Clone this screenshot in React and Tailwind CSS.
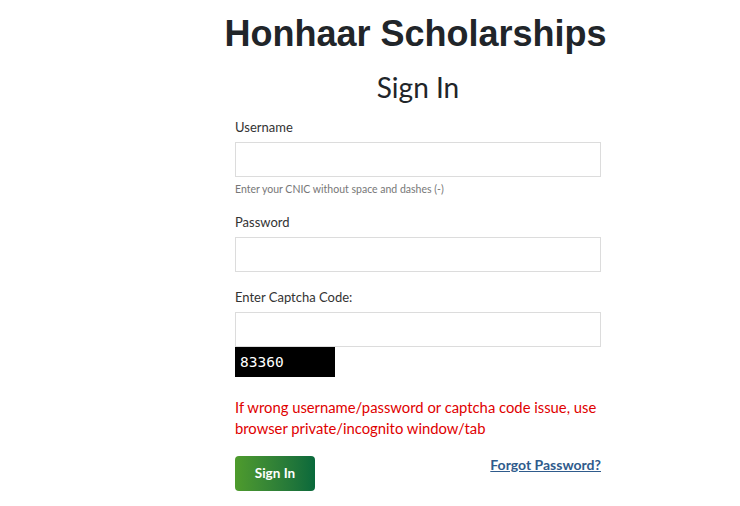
import React from 'react';

const sans = { fontFamily: 'Lato, "Open Sans", sans-serif' };

const Field = ({ label, help, className = '' }) => (
  <div className={`flex flex-col ${className}`}>
    <label className="text-[13px] text-[#333] leading-[18px] mb-[6px]">{label}</label>
    <input className="h-[35px] w-full border border-[#dcdcdc] bg-white outline-none" />
    {help && <p className="text-[10.5px] text-[#777] leading-[14px] mt-[5px]">{help}</p>}
  </div>
);

export default function App() {
  return (
    <div className="min-h-[506px] bg-white" style={sans}>
      <div className="ml-[235px] w-[366px] flex flex-col">
        {/* Titulo */}
        <div className="flex justify-center pt-[12px] pr-[5px]">
          <h1
            className="whitespace-nowrap text-[36px] font-bold leading-[44px] text-[#212529]"
            style={{ fontFamily: '"Liberation Sans", Arial, sans-serif' }}
          >
            Honhaar Scholarships
          </h1>
        </div>
        <div className="flex justify-center mt-[13px]">
          <h2 className="text-[28px] leading-[36px] text-[#212529]">Sign In</h2>
        </div>

        <div className="mt-[13px] flex flex-col">
          <Field label="Username" help="Enter your CNIC without space and dashes (-)" />
          <Field label="Password" className="mt-[17px]" />
          <Field label="Enter Captcha Code:" className="mt-[16px]" />
          <div className="w-[100px] h-[30px] bg-black pl-[5px] pt-[2px]">
            <span
              className="text-white text-[14.5px] leading-[18px]"
              style={{ fontFamily: '"DejaVu Sans Mono", monospace' }}
            >
              83360
            </span>
          </div>

          <p className="mt-[20px] text-[14.8px] leading-[21px] text-[#e00000]">
            If wrong username/password or captcha code issue, use browser private/incognito window/tab
          </p>

          <div className="mt-[17px] flex items-start justify-between">
            <button className="w-[80px] h-[35px] rounded-[4px] bg-gradient-to-r from-[#4e9b2c] to-[#08693b] text-white text-[13.5px] font-bold">
              Sign In
            </button>
            <a href="#" className="text-[14px] font-bold text-[#2f5b8c] underline leading-[18px]">
              Forgot Password?
            </a>
          </div>
        </div>
      </div>
    </div>
  );
}
